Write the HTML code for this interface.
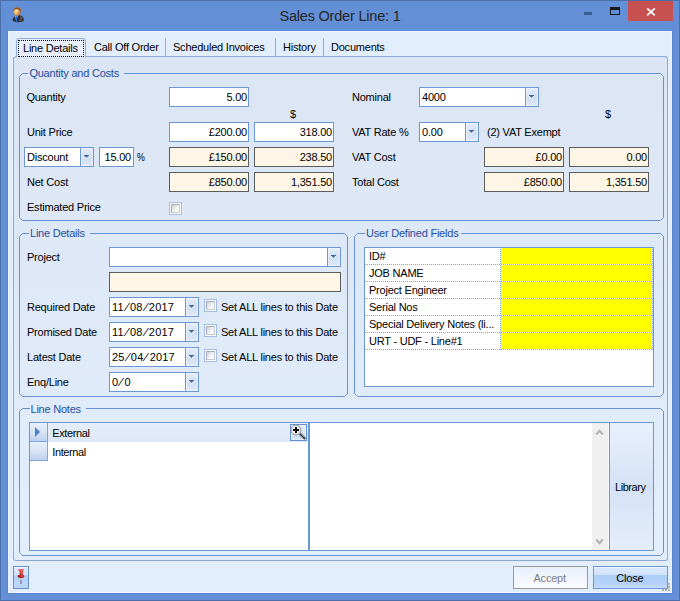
<!DOCTYPE html>
<html><head><meta charset="utf-8"><title>Sales Order Line: 1</title>
<style>
html,body{margin:0;padding:0}
body{width:680px;height:601px;overflow:hidden;background:#638fd6;position:relative;font-family:"Liberation Sans",sans-serif;font-size:11px;color:#000;letter-spacing:-0.22px}
div,span{box-sizing:border-box}
.a{position:absolute}
.t{position:absolute;white-space:nowrap;line-height:13px;height:13px}
.frame{left:0;top:0;width:680px;height:601px;border:1px solid #4b6fa9}
.client{left:8px;top:31px;width:664px;height:562px;background:#e3eefd;box-shadow:inset 0 0 0 1px #ecf3fe}
.title{left:0;top:5.6px;width:680px;text-align:center;font-size:14.5px;line-height:20px;height:20px;color:#262626;letter-spacing:-0.2px}
.page{left:13px;top:56px;width:655px;height:505px;background:linear-gradient(#dbe5f3,#e3eefd);border:1px solid #8cadde;border-bottom-color:#8da6cb;border-radius:3px}
.grp{border:1px solid #6d96d6;border-radius:4px}
.gl{color:#1d4fa0;background:#dbe5f3;padding:0 5px 0 1px}
.in{background:#fff;border:1px solid #6d96d6;height:20px;line-height:18px;padding:0 2px;white-space:nowrap}
.r{text-align:right;padding-right:1px}
.dis{background:#fdf5e6;border:1px solid #5c5c5c}
.dd{position:absolute;right:0;top:0;width:13px;height:18px;border-left:1px solid #6d96d6;background:linear-gradient(#e4edfb,#d0dff5 55%,#e0eafa);box-shadow:inset 0 0 0 1px rgba(255,255,255,.45)}
.dd:after{content:"";position:absolute;left:3px;top:7px;width:5px;height:4px;background:linear-gradient(#3f66a3,#3f66a3) 0 0/5px 1px no-repeat,linear-gradient(#4870ad,#4870ad) 1px 1px/3px 1px no-repeat,linear-gradient(#5079b6,#5079b6) 2px 2px/1px 1px no-repeat,linear-gradient(#fff,#fff) 0 1px/5px 1px no-repeat,linear-gradient(#fff,#fff) 1px 2px/3px 1px no-repeat,linear-gradient(#fff,#fff) 2px 3px/1px 1px no-repeat}
.cb{width:13px;height:13px;border:1px solid #a3bce3;background:#fff}
.cb:after{content:"";position:absolute;left:1px;top:1px;width:9px;height:9px;box-sizing:border-box;border:1px solid;border-color:#a4aab7 #c3c7d0 #c3c7d0 #a4aab7;background:linear-gradient(135deg,#cdd1d9,#fdfdfd 75%)}
.hl{left:365px;width:288px;height:1px;background:repeating-linear-gradient(90deg,#84a6de 0 1px,#fff 1px 2px)}
.dt{letter-spacing:0.2px}
.dt i{display:inline-block;font-style:normal;width:6.2px;text-align:center;transform:skewX(-22deg)}
</style></head><body>
<div class="a frame"></div>
<div class="a title"><span class="m">Sales Order Line: 1</span></div>
<!-- app icon -->
<svg class="a" style="left:11px;top:6px" width="15" height="18" viewBox="0 0 15 18">
<defs><radialGradient id="fg" cx="0.3" cy="0.35" r="0.8"><stop offset="0" stop-color="#fffbe8"/><stop offset="0.4" stop-color="#f4bb70"/><stop offset="1" stop-color="#c0691d"/></radialGradient></defs>
<path d="M1.6 14.5 C1.6 11.2 3.6 10 6 9.8 L8.6 9.2 C11.6 9.6 12.9 11.4 12.8 14.6 C11.5 16.6 3 16.8 1.6 14.5 Z" fill="#2c3033"/>
<path d="M4.3 10 L5.3 16.2 L6.6 10 Z" fill="#f2f4f8"/>
<path d="M5 10.2 L4.7 15.8 L5.6 16.2 L6.3 10.2 Z" fill="#1763e0"/>
<path d="M9.2 10.2 L11.4 11 L11 13 L9 12.4 Z" fill="#5a5e62"/>
<rect x="8.4" y="13.4" width="1" height="1.4" fill="#6a9a4a"/><rect x="9.4" y="13.6" width="0.9" height="1.2" fill="#b0583a"/>
<ellipse cx="6.1" cy="5.6" rx="3.4" ry="4.2" fill="url(#fg)"/>
<path d="M2.5 5 C2.2 0.2 9.8 0 9.9 4.6 C9.9 5.6 9.6 6.2 9.4 6.6 C9.2 4.6 8.2 3.4 6.4 3.2 C4.6 3 3.4 3.6 2.9 6 Z" fill="#9c5416"/>
</svg>
<!-- window buttons -->
<div class="a" style="left:584px;top:12.3px;width:8px;height:2.6px;background:#3d5c92"></div>
<div class="a" style="left:610px;top:7px;width:10px;height:8px;border:1px solid #1a1a1a;border-top-width:3px"></div>
<div class="a" style="left:628px;top:1px;width:45px;height:20px;background:#c75050"></div>
<svg class="a" style="left:646px;top:7px" width="10" height="10" viewBox="0 0 10 10"><path d="M1.2 1.3 L8.8 8.3 M8.8 1.3 L1.2 8.3" stroke="#fff" stroke-width="1.7" fill="none"/></svg>

<div class="a" style="left:7px;top:31px;width:666px;height:563px;background:#5a85cd"></div>
<div class="a client"></div>
<div class="a page"></div>

<!-- tabs -->
<div class="a" style="left:13px;top:56px;width:3px;height:1px;background:#e3eefd"></div><svg class="a" style="left:13px;top:54px" width="5" height="5" viewBox="0 0 5 5"><path d="M3.5 1.5 L0.5 4.5" stroke="#8cadde" stroke-width="1" fill="none"/></svg>
<div class="a" style="left:16px;top:38px;width:70px;height:19px;background:#e9eefb;border:1px solid #8cadde;border-bottom:0;border-radius:4px 4px 0 0"></div>
<div class="a" style="left:18px;top:40px;width:66px;height:17px;border:1px dotted #000"></div>
<div class="t" style="left:23px;top:42px"><span class="m">Line Details</span></div>
<div class="t" style="left:94px;top:41px"><span class="m">Call Off Order</span></div>
<div class="t" style="left:173px;top:41px"><span class="m">Scheduled Invoices</span></div>
<div class="t" style="left:283px;top:41px"><span class="m">History</span></div>
<div class="t" style="left:331px;top:41px"><span class="m">Documents</span></div>
<div class="a" style="left:165px;top:38px;width:1px;height:18px;background:#8cadde"></div>
<div class="a" style="left:275px;top:38px;width:1px;height:18px;background:#8cadde"></div>
<div class="a" style="left:323px;top:38px;width:1px;height:18px;background:#8cadde"></div>

<!-- group 1 -->
<svg class="a" style="left:19px;top:73px" width="645" height="148" viewBox="0 0 645 148"><path d="M3.5 0.5 H641.5 L644.5 3.5 V144.5 L641.5 147.5 H3.5 L0.5 144.5 V3.5 Z" fill="none" stroke="#6791d4" stroke-width="1"/></svg>
<div class="t gl" style="left:28.4px;top:67px"><span class="m">Quantity and Costs</span></div>
<div class="t" style="left:26.4px;top:91px"><span class="m">Quantity</span></div>
<div class="t" style="left:27px;top:126px"><span class="m">Unit Price</span></div>
<div class="t" style="left:27px;top:176px"><span class="m">Net Cost</span></div>
<div class="t" style="left:27px;top:201px"><span class="m">Estimated Price</span></div>
<div class="a in r" style="left:169px;top:87px;width:80px"><span class="m">5.00</span></div>
<div class="t" style="left:290px;top:108px"><span class="m">$</span></div>
<div class="a in r" style="left:169px;top:122px;width:80px"><span class="m">£200.00</span></div>
<div class="a in r" style="left:254px;top:122px;width:80px"><span class="m">318.00</span></div>
<div class="a in" style="left:24px;top:147px;width:70px"><span class="m">Discount</span><div class="dd"></div></div>
<div class="a in r" style="left:99px;top:147px;width:35px;padding-right:2px"><span class="m">15.00</span></div>
<div class="t" style="left:137.3px;top:151px"><span class="m" style="display:inline-block;transform-origin:0 50%;transform:scaleX(.8)">%</span></div>
<div class="a in r dis" style="left:169px;top:147px;width:80px"><span class="m">£150.00</span></div>
<div class="a in r dis" style="left:254px;top:147px;width:80px"><span class="m">238.50</span></div>
<div class="a in r dis" style="left:169px;top:172px;width:80px"><span class="m">£850.00</span></div>
<div class="a in r dis" style="left:254px;top:172px;width:80px"><span class="m">1,351.50</span></div>
<div class="a cb" style="left:169px;top:202px"></div>

<div class="t" style="left:352px;top:91px"><span class="m">Nominal</span></div>
<div class="a in" style="left:419px;top:87px;width:120px"><span class="m">4000</span><div class="dd"></div></div>
<div class="t" style="left:605px;top:108px"><span class="m">$</span></div>
<div class="t" style="left:352px;top:126px"><span class="m">VAT Rate %</span></div>
<div class="a in" style="left:419px;top:122px;width:60px"><span class="m">0.00</span><div class="dd"></div></div>
<div class="t" style="left:487px;top:126px"><span class="m">(2) VAT Exempt</span></div>
<div class="t" style="left:352px;top:151px"><span class="m">VAT Cost</span></div>
<div class="t" style="left:352px;top:176px"><span class="m">Total Cost</span></div>
<div class="a in r dis" style="left:484px;top:147px;width:80px"><span class="m">£0.00</span></div>
<div class="a in r dis" style="left:569px;top:147px;width:80px"><span class="m">0.00</span></div>
<div class="a in r dis" style="left:484px;top:172px;width:80px"><span class="m">£850.00</span></div>
<div class="a in r dis" style="left:569px;top:172px;width:80px"><span class="m">1,351.50</span></div>

<!-- group 2 -->
<svg class="a" style="left:19px;top:233px" width="329" height="164" viewBox="0 0 329 164"><path d="M3.5 0.5 H325.5 L328.5 3.5 V160.5 L325.5 163.5 H3.5 L0.5 160.5 V3.5 Z" fill="none" stroke="#6791d4" stroke-width="1"/></svg>
<div class="t gl" style="left:29px;top:227px;background:#dee8f7"><span class="m">Line Details</span></div>
<div class="t" style="left:27px;top:251px"><span class="m">Project</span></div>
<div class="a in" style="left:109px;top:247px;width:232px"><div class="dd"></div></div>
<div class="a in dis" style="left:109px;top:272px;width:232px"></div>
<div class="t" style="left:27px;top:301px"><span class="m">Required Date</span></div>
<div class="t" style="left:27px;top:326px"><span class="m">Promised Date</span></div>
<div class="t" style="left:27px;top:351px"><span class="m">Latest Date</span></div>
<div class="t" style="left:27px;top:376px"><span class="m">Enq/Line</span></div>
<div class="a in" style="left:109px;top:297px;width:90px"><span class="m dt">11<i>/</i>08<i>/</i>2017</span><div class="dd"></div></div>
<div class="a in" style="left:109px;top:322px;width:90px"><span class="m dt">11<i>/</i>08<i>/</i>2017</span><div class="dd"></div></div>
<div class="a in" style="left:109px;top:347px;width:90px"><span class="m dt">25<i>/</i>04<i>/</i>2017</span><div class="dd"></div></div>
<div class="a in" style="left:109px;top:372px;width:90px"><span class="m dt">0<i>/</i>0</span><div class="dd"></div></div>
<div class="a cb" style="left:204px;top:299px"></div>
<div class="a cb" style="left:204px;top:324px"></div>
<div class="a cb" style="left:204px;top:349px"></div>
<div class="t" style="left:221px;top:301px"><span class="m">Set ALL lines to this Date</span></div>
<div class="t" style="left:221px;top:326px"><span class="m">Set ALL lines to this Date</span></div>
<div class="t" style="left:221px;top:351px"><span class="m">Set ALL lines to this Date</span></div>

<!-- group 3 -->
<svg class="a" style="left:354px;top:233px" width="310" height="164" viewBox="0 0 310 164"><path d="M3.5 0.5 H306.5 L309.5 3.5 V160.5 L306.5 163.5 H3.5 L0.5 160.5 V3.5 Z" fill="none" stroke="#6791d4" stroke-width="1"/></svg>
<div class="t gl" style="left:365px;top:227px;background:#dee8f7;padding-right:3px"><span class="m">User Defined Fields</span></div>
<div class="a" style="left:364px;top:247px;width:290px;height:140px;background:#fff;border:1px solid #6d96d6"></div>
<div class="a" style="left:501px;top:248px;width:151px;height:101px;background:#ffff00"></div>
<div class="a hl" style="top:264px"></div><div class="a hl" style="top:281px"></div><div class="a hl" style="top:298px"></div>
<div class="a hl" style="top:315px"></div><div class="a hl" style="top:332px"></div><div class="a hl" style="top:349px"></div>
<div class="a" style="left:500px;top:248px;width:1px;height:102px;background:repeating-linear-gradient(180deg,#fff 0 1px,#84a6de 1px 2px)"></div>
<div class="a" style="left:652px;top:248px;width:1px;height:102px;background:repeating-linear-gradient(180deg,#fff 0 1px,#84a6de 1px 2px)"></div>
<div class="t" style="left:369px;top:250px"><span class="m">ID#</span></div>
<div class="t" style="left:369px;top:267px"><span class="m">JOB NAME</span></div>
<div class="t" style="left:369px;top:284px"><span class="m">Project Engineer</span></div>
<div class="t" style="left:369px;top:301px"><span class="m">Serial Nos</span></div>
<div class="t" style="left:369px;top:318px"><span class="m">Special Delivery Notes (li...</span></div>
<div class="t" style="left:369px;top:335px"><span class="m">URT - UDF - Line#1</span></div>

<!-- group 4 -->
<svg class="a" style="left:19px;top:408px" width="645" height="148" viewBox="0 0 645 148"><path d="M3.5 0.5 H641.5 L644.5 3.5 V144.5 L641.5 147.5 H3.5 L0.5 144.5 V3.5 Z" fill="none" stroke="#6791d4" stroke-width="1"/></svg>
<div class="t gl" style="left:29.5px;top:403px;background:#e1ebfa"><span class="m">Line Notes</span></div>
<div class="a" style="left:29px;top:422px;width:280px;height:129px;background:#fff;border:1px solid #6d96d6"></div>
<div class="a" style="left:30px;top:423px;width:278px;height:19px;background:linear-gradient(#e6eefb,#dce7f7)"></div>
<div class="a" style="left:30px;top:423px;width:18px;height:19px;background:linear-gradient(#e7effb,#d6e2f5 55%,#bdd0ec);border-right:1px solid #7fa3dc;border-bottom:1px solid #7fa3dc"></div>
<div class="a" style="left:30px;top:442px;width:18px;height:19px;background:linear-gradient(#e7effb,#d6e2f5 55%,#bdd0ec);border-right:1px solid #7fa3dc;border-bottom:1px solid #7fa3dc"></div>
<div class="a" style="left:35px;top:427px;width:0;height:0;border:5px solid transparent;border-left:5px solid #4a80d0;border-right:0"></div>
<div class="t" style="left:52.3px;top:426.6px;letter-spacing:-0.4px"><span class="m">External</span></div>
<div class="t" style="left:52.3px;top:445.7px;letter-spacing:-0.4px"><span class="m">Internal</span></div>
<div class="a" style="left:290px;top:424px;width:17px;height:17px;border:1px solid #6490d4;background:linear-gradient(#e2ebfa,#cfddf4);box-shadow:inset 0 0 0 1px rgba(255,255,255,.5)"></div>
<svg class="a" style="left:290px;top:424px" width="17" height="17" viewBox="0 0 17 17"><defs><radialGradient id="lg" cx="0.4" cy="0.35" r="0.7"><stop offset="0" stop-color="#fff"/><stop offset="1" stop-color="#d8dcdc"/></radialGradient></defs><path d="M10 10 L15.4 15.2" stroke="#262626" stroke-width="2.6" stroke-dasharray="1.1 0.4"/><circle cx="5.9" cy="6" r="5" fill="url(#lg)" stroke="#8e9292" stroke-width="1"/><rect x="3" y="5" width="6" height="2" fill="#000"/><rect x="5" y="3" width="2" height="6" fill="#000"/></svg>
<div class="a" style="left:309px;top:422px;width:300px;height:129px;background:#fff;border:1px solid #6d96d6"></div>
<div class="a" style="left:592px;top:423px;width:16px;height:127px;background:#f0f0f0"></div><div class="a" style="left:608px;top:423px;width:1px;height:127px;background:#f6f8fc"></div>
<svg class="a" style="left:595px;top:428px" width="9" height="8" viewBox="0 0 9 8"><path d="M1.2 6.5 L4.5 2.8 L7.8 6.5" stroke="#b2b2b2" stroke-width="2.2" fill="none"/></svg>
<svg class="a" style="left:595px;top:538px" width="9" height="8" viewBox="0 0 9 8"><path d="M1.2 1.5 L4.5 5.2 L7.8 1.5" stroke="#b2b2b2" stroke-width="2.2" fill="none"/></svg>
<div class="a" style="left:609px;top:422px;width:45px;height:129px;border:1px solid #6d96d6;background:linear-gradient(#e8f0fc,#d5e2f6 50%,#e4edfb)"></div>
<div class="t" style="left:615px;top:481px;letter-spacing:-0.45px"><span class="m">Library</span></div>

<!-- bottom -->
<div class="a" style="left:13px;top:566px;width:16px;height:23px;border:1px solid #6490d4;background:linear-gradient(#e0ebfc,#d2e2fb 39%,#b1d0fa 40%,#bed8fb);box-shadow:inset 0 1px 0 rgba(255,255,255,.6)"></div>
<svg class="a" style="left:13px;top:566px" width="16" height="23" viewBox="0 0 16 23"><defs><linearGradient id="ng" x1="0" y1="0" x2="0" y2="1"><stop offset="0" stop-color="#d4d6d8"/><stop offset="1" stop-color="#7c848c"/></linearGradient><linearGradient id="pg" x1="0" y1="0" x2="1" y2="0"><stop offset="0" stop-color="#c02020"/><stop offset=".6" stop-color="#e26a6a"/><stop offset="1" stop-color="#b82222"/></linearGradient></defs><rect x="7" y="11.5" width="2" height="6.2" fill="url(#ng)"/><rect x="6.6" y="4.5" width="3.4" height="5" fill="url(#pg)"/><rect x="5" y="3.1" width="6" height="2" rx="1" fill="#e46868"/><ellipse cx="8" cy="10.3" rx="3.3" ry="1.8" fill="#bb1c1c"/><ellipse cx="9" cy="10" rx="1" ry=".8" fill="#e06a6a"/></svg>
<div class="a" style="left:513px;top:566px;width:75px;height:23px;border:1px solid #989a9c;background:linear-gradient(#e9f0fc,#f9fbff)"></div>
<div class="t" style="left:533.5px;top:571.7px;color:#7e7e7e"><span class="m">Accept</span></div>
<div class="a" style="left:593px;top:566px;width:75px;height:23px;border:1px solid #6d96d6;background:linear-gradient(#dbe9fd,#d1e3fc 39%,#adcdf9 40%,#b4d2fa 78%,#c6dcfb);box-shadow:inset 0 1px 0 rgba(255,255,255,.5)"></div>
<div class="t" style="left:616.3px;top:572px"><span class="m">Close</span></div>
<!-- grip -->
<div class="a" style="left:668px;top:583px;width:2px;height:2px;background:#b7afa6"></div><div class="a" style="left:668px;top:586px;width:2px;height:2px;background:#b7afa6"></div><div class="a" style="left:668px;top:589px;width:2px;height:2px;background:#b7afa6"></div><div class="a" style="left:665px;top:589px;width:2px;height:2px;background:#b7afa6"></div><div class="a" style="left:662px;top:589px;width:2px;height:2px;background:#b7afa6"></div>
</body></html>
